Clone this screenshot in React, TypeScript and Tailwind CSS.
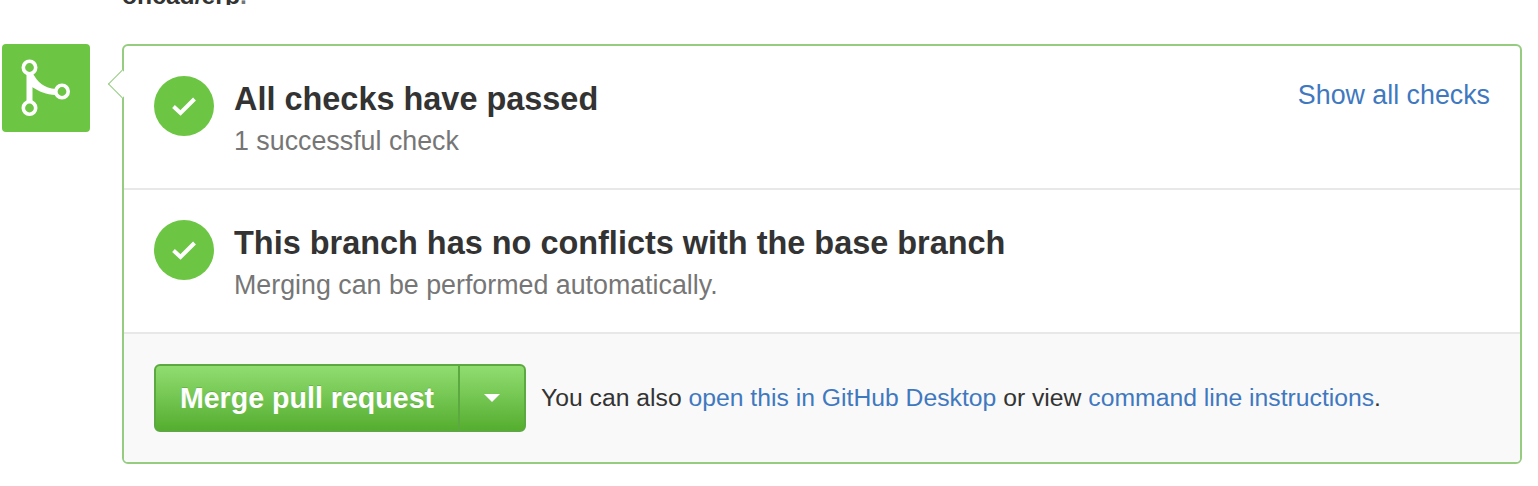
export default function App() {
  const Check = () => (
    <div className="w-[60px] h-[60px] rounded-full bg-[#6cc644] flex items-center justify-center shrink-0">
      <svg width="24" height="20" viewBox="0 0 24 20" fill="none">
        <path d="M1.5 10.5 L8.5 17 L22.5 3" stroke="white" strokeWidth="4" />
      </svg>
    </div>
  );
  return (
    <div className="w-[1538px] h-[486px] bg-white overflow-hidden font-['Liberation_Sans',Arial,sans-serif]">
      <div className="h-[5px] overflow-hidden pl-[122px] mb-[39px] flex items-end">
        <div className="text-[24.7px] leading-[32px] font-bold text-[#333] mb-[-7px] whitespace-nowrap">oncad/erp<span className="text-[#767676]">.</span></div>
      </div>
      <div className="flex pl-[2px]">
        <div className="w-[88px] h-[88px] rounded-[4px] bg-[#6cc644] flex items-center justify-center shrink-0">
          <svg width="88" height="88" viewBox="0 0 88 88" fill="none" stroke="white" strokeWidth="3.6">
            <circle cx="27.5" cy="23.5" r="6.2" />
            <circle cx="27.5" cy="64" r="6.2" />
            <circle cx="60" cy="47.5" r="6.2" />
            <path d="M24.5 29 H30.5 V58 H24.5 Z" fill="white" stroke="none" />
            <path d="M30 28 C36 39 42 44 54 45 L54 51 C44 50.5 37 47.5 30 43 Z" fill="white" stroke="none" />
          </svg>
        </div>
        <div className="relative ml-[32px] w-[1400px] h-[420px] border-2 border-[#95cc80] rounded-[6px] flex flex-col">
          <div className="absolute left-[-12px] top-[28px] w-[20px] h-[20px] rotate-45 bg-white border-l-[1.5px] border-b-[1.5px] border-[#95cc80]" />
          <div className="relative h-[144px] flex pl-[30px] pr-[30px] pt-[30px] border-b-2 border-[#e8e8e8]">
            <Check />
            <div className="ml-[20px] flex-1">
              <div className="text-[32.45px] leading-[44px] font-bold text-[#333] mt-[1px]">All checks have passed</div>
              <div className="text-[26.8px] leading-[40px] text-[#767676]">1 successful check</div>
            </div>
            <a className="text-[26.8px] leading-[36px] text-[#4078c0] mt-[1px]">Show all checks</a>
          </div>
          <div className="h-[144px] flex pl-[30px] pt-[30px] border-b-2 border-[#e8e8e8]">
            <Check />
            <div className="ml-[20px]">
              <div className="text-[32.45px] leading-[44px] font-bold text-[#333] mt-[1px]">This branch has no conflicts with the base branch</div>
              <div className="text-[26.8px] leading-[40px] text-[#767676]">Merging can be performed automatically.</div>
            </div>
          </div>
          <div className="flex-1 bg-[#f9f9f9] rounded-b-[4px] flex items-start pl-[30px] pt-[30px]">
            <div className="flex h-[68px] w-[372px] rounded-[6px] border-2 border-[#5ca941] bg-gradient-to-b from-[#91dd70] to-[#55ae2e] text-white">
              <div className="w-[302px] flex items-center justify-center text-[28.6px] font-bold [text-shadow:0_-1px_0_rgba(0,0,0,0.15)] whitespace-nowrap">Merge pull request</div>
              <div className="flex-1 border-l-2 border-[#5ca941] flex items-center justify-center">
                <svg width="16" height="8" viewBox="0 0 16 8"><path d="M0 0 H16 L8 8 Z" fill="white" /></svg>
              </div>
            </div>
            <div className="ml-[15px] h-[68px] flex items-center text-[24.73px] text-[#333]">
              <span>You can also <a className="text-[#4078c0]">open this in GitHub Desktop</a> or view <a className="text-[#4078c0]">command line instructions</a>.</span>
            </div>
          </div>
        </div>
      </div>
    </div>
  );
}
